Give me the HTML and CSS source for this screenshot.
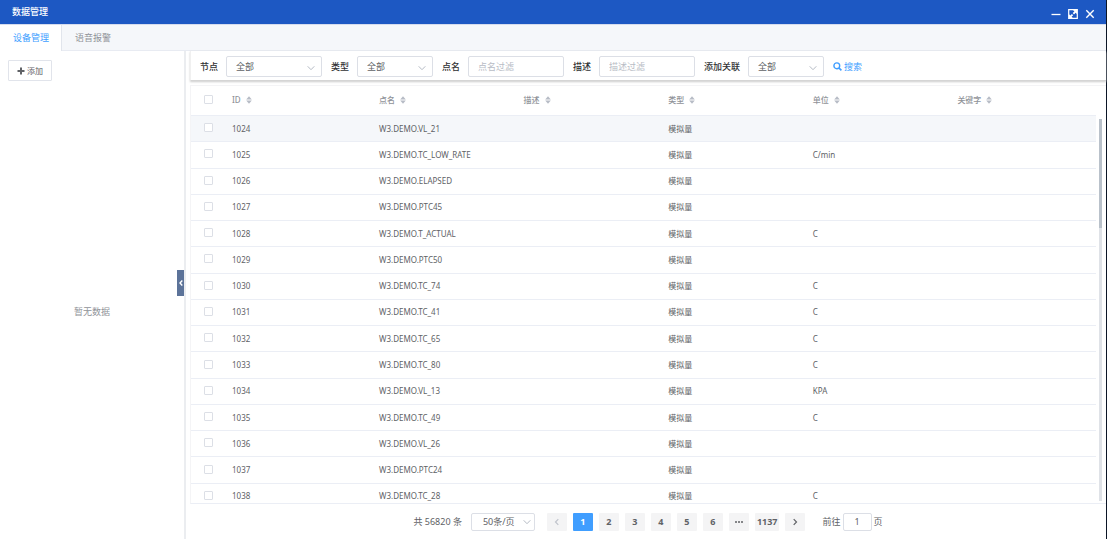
FILE: index.html
```html
<!DOCTYPE html>
<html lang="zh-CN">
<head>
<meta charset="utf-8">
<title>数据管理</title>
<link rel="stylesheet" href="styles.css">
</head>
<body>
<svg class="defs" aria-hidden="true">
  <symbol id="down" viewBox="0 0 8 8"><path d="M.7 2.3 4 5.7l3.3-3.4" fill="none" stroke="currentColor"/></symbol>
  <symbol id="sort" viewBox="0 0 6 8"><path d="M3 .3 5.8 3.4H.2zM3 7.7 5.8 4.6H.2z" fill="currentColor"/></symbol>
</svg>
<div class="window">
  <header class="titlebar">
    <h1 class="title">数据管理</h1>
    <div class="controls">
      <button class="control" aria-label="最小化"><svg viewBox="0 0 10 10"><path d="M.5 5.5h9" stroke="currentColor" stroke-width="1.3"/></svg></button>
      <button class="control" aria-label="最大化"><svg viewBox="0 0 10 10"><path d="M.7.7h8.6v8.6H.7z" fill="none" stroke="currentColor" stroke-width="1.2"/><path d="M5 1h4v4L7.700 3.700 6 5.400 4.700 4.100 6.400 2.400zM1 9V5.200l1.300 1.300 1.600-1.600 1.300 1.300-1.600 1.600L4.800 9z" fill="currentColor"/></svg></button>
      <button class="control" aria-label="关闭"><svg viewBox="0 0 10 10"><path d="m1.300 1.300 7.400 7.400m0-7.400L1.300 8.700" stroke="currentColor" stroke-width="1.4"/></svg></button>
    </div>
  </header>
  <nav class="tabs">
    <button class="tab tab-active">设备管理</button>
    <button class="tab">语音报警</button>
  </nav>
  <div class="workspace">
    <aside class="side">
      <button class="add"><svg viewBox="0 0 8 8"><path d="M4 .5v7M.5 4h7" stroke="currentColor" stroke-width="2"/></svg>添加</button>
      <p class="empty">暂无数据</p>
      <button class="collapse" aria-label="收起"><svg viewBox="0 0 6 8"><path d="M4.300 1.500 2 4l2.300 2.500" fill="none" stroke="currentColor" stroke-width="1.400"/></svg></button>
    </aside>
    <main class="main">
      <form class="filters">
        <label class="label" for="node">节点</label>
        <div class="select"><select id="node"><option>全部</option></select><svg><use href="#down"/></svg></div>
        <label class="label" for="type">类型</label>
        <div class="select select-short"><select id="type"><option>全部</option></select><svg><use href="#down"/></svg></div>
        <label class="label" for="name">点名</label>
        <input class="field" id="name" type="text" placeholder="点名过滤">
        <label class="label" for="desc">描述</label>
        <input class="field" id="desc" type="text" placeholder="描述过滤">
        <label class="label" for="linked">添加关联</label>
        <div class="select select-short"><select id="linked"><option>全部</option></select><svg><use href="#down"/></svg></div>
        <button class="search" type="button"><svg viewBox="0 0 9 9"><circle cx="3.800" cy="3.800" r="2.900" fill="none" stroke="currentColor" stroke-width="1.400"/><path d="m6 6 2.400 2.400" stroke="currentColor" stroke-width="1.700"/></svg>搜索</button>
      </form>
      <section class="list">
        <div class="scroller">
          <table class="table">
            <colgroup><col class="col-check"><col class="col-id"><col><col><col><col><col></colgroup>
            <thead>
              <tr>
                <th class="check"><input type="checkbox" aria-label="全选"></th>
                <th><button class="sort">ID<svg><use href="#sort"/></svg></button></th>
                <th><button class="sort">点名<svg><use href="#sort"/></svg></button></th>
                <th><button class="sort">描述<svg><use href="#sort"/></svg></button></th>
                <th><button class="sort">类型<svg><use href="#sort"/></svg></button></th>
                <th><button class="sort">单位<svg><use href="#sort"/></svg></button></th>
                <th><button class="sort">关键字<svg><use href="#sort"/></svg></button></th>
              </tr>
            </thead>
            <tbody>
              <tr class="hover"><td class="check"><input type="checkbox" aria-label="1024"></td><td>1024</td><td>W3.DEMO.VL_21</td><td></td><td>模拟量</td><td></td><td></td></tr>
              <tr><td class="check"><input type="checkbox" aria-label="1025"></td><td>1025</td><td>W3.DEMO.TC_LOW_RATE</td><td></td><td>模拟量</td><td>C/min</td><td></td></tr>
              <tr><td class="check"><input type="checkbox" aria-label="1026"></td><td>1026</td><td>W3.DEMO.ELAPSED</td><td></td><td>模拟量</td><td></td><td></td></tr>
              <tr><td class="check"><input type="checkbox" aria-label="1027"></td><td>1027</td><td>W3.DEMO.PTC45</td><td></td><td>模拟量</td><td></td><td></td></tr>
              <tr><td class="check"><input type="checkbox" aria-label="1028"></td><td>1028</td><td>W3.DEMO.T_ACTUAL</td><td></td><td>模拟量</td><td>C</td><td></td></tr>
              <tr><td class="check"><input type="checkbox" aria-label="1029"></td><td>1029</td><td>W3.DEMO.PTC50</td><td></td><td>模拟量</td><td></td><td></td></tr>
              <tr><td class="check"><input type="checkbox" aria-label="1030"></td><td>1030</td><td>W3.DEMO.TC_74</td><td></td><td>模拟量</td><td>C</td><td></td></tr>
              <tr><td class="check"><input type="checkbox" aria-label="1031"></td><td>1031</td><td>W3.DEMO.TC_41</td><td></td><td>模拟量</td><td>C</td><td></td></tr>
              <tr><td class="check"><input type="checkbox" aria-label="1032"></td><td>1032</td><td>W3.DEMO.TC_65</td><td></td><td>模拟量</td><td>C</td><td></td></tr>
              <tr><td class="check"><input type="checkbox" aria-label="1033"></td><td>1033</td><td>W3.DEMO.TC_80</td><td></td><td>模拟量</td><td>C</td><td></td></tr>
              <tr><td class="check"><input type="checkbox" aria-label="1034"></td><td>1034</td><td>W3.DEMO.VL_13</td><td></td><td>模拟量</td><td>KPA</td><td></td></tr>
              <tr><td class="check"><input type="checkbox" aria-label="1035"></td><td>1035</td><td>W3.DEMO.TC_49</td><td></td><td>模拟量</td><td>C</td><td></td></tr>
              <tr><td class="check"><input type="checkbox" aria-label="1036"></td><td>1036</td><td>W3.DEMO.VL_26</td><td></td><td>模拟量</td><td></td><td></td></tr>
              <tr><td class="check"><input type="checkbox" aria-label="1037"></td><td>1037</td><td>W3.DEMO.PTC24</td><td></td><td>模拟量</td><td></td><td></td></tr>
              <tr><td class="check"><input type="checkbox" aria-label="1038"></td><td>1038</td><td>W3.DEMO.TC_28</td><td></td><td>模拟量</td><td>C</td><td></td></tr>
            </tbody>
          </table>
        </div>
        <div class="track"><div class="thumb"></div></div>
      </section>
      <footer class="pagination">
        <span>共 56820 条</span>
        <div class="select select-page"><select aria-label="每页条数"><option>50条/页</option></select><svg><use href="#down"/></svg></div>
        <div class="pages">
          <button class="page page-off" aria-label="上一页" disabled><svg viewBox="0 0 8 8"><path d="M5.300 1.200 2.500 4l2.800 2.800" fill="none" stroke="currentColor" stroke-width="1.200"/></svg></button>
          <button class="page page-current">1</button>
          <button class="page">2</button>
          <button class="page">3</button>
          <button class="page">4</button>
          <button class="page">5</button>
          <button class="page">6</button>
          <button class="page" aria-label="更多"><svg viewBox="0 0 8 8"><path d="M0 3.200h2v1.600H0zm3 0h2v1.600H3zm3 0h2v1.600H6z" fill="currentColor"/></svg></button>
          <button class="page">1137</button>
          <button class="page" aria-label="下一页"><svg viewBox="0 0 8 8"><path d="M2.700 1.200 5.500 4 2.700 6.800" fill="none" stroke="currentColor" stroke-width="1.200"/></svg></button>
        </div>
        <label class="jump">前往<input type="text" value="1">页</label>
      </footer>
    </main>
  </div>
</div>
</body>
</html>
```

FILE: styles.css
```css
* { box-sizing: border-box; }
body {
  margin: 0;
  color: #606266;
  font: 9px/12px "Noto Sans", "Noto Sans CJK SC", sans-serif;
}
button, input, select { margin: 0; padding: 0; border: 0; background: none; color: inherit; font: inherit; }
button { display: flex; align-items: center; justify-content: center; cursor: pointer; }
svg { display: block; flex: none; }
.defs { position: absolute; width: 0; height: 0; }

.window {
  display: flex;
  flex-direction: column;
  height: 100vh;
  border-right: 1px solid #0b1526;
  background: #fff;
}
.titlebar {
  display: flex;
  align-items: center;
  justify-content: space-between;
  height: 24px;
  padding: 0 11px 0 12px;
  background: #1d58c3;
  color: #fff;
}
.title { margin: 0; font-size: 9px; font-weight: 500; }
.controls { display: flex; gap: 7px; padding-top: 3px; }
.control svg { width: 10px; height: 10px; }

.tabs {
  display: flex;
  height: 27px;
  border-top: 1px solid #d5dcee;
  border-bottom: 1px solid #e8ebf2;
  background: #f5f7fa;
}
.tab { padding: 0 12px 0 13px; color: #909399; }
.tab-active {
  margin-bottom: -1px;
  border-right: 1px solid #e1e5ec;
  background: #fff;
  color: #409eff;
}

.workspace { display: flex; flex: 1; min-height: 0; }
.side {
  position: relative;
  display: flex;
  flex-direction: column;
  flex: none;
  width: 186px;
  padding: 9px 8px 0;
  border-right: 2px solid #ebedf0;
}
.add {
  align-self: flex-start;
  gap: 2px;
  height: 21px;
  padding: 0 8px;
  border: 1px solid #e1e4eb;
  border-radius: 1px;
  font-size: 8px;
}
.add svg { width: 8px; height: 8px; }
.empty { margin: auto; padding-top: 4px; color: #909399; }
.collapse {
  position: absolute;
  top: 219px;
  right: 0;
  width: 7px;
  height: 26px;
  background: #5c7399;
  color: #fff;
}
.collapse svg { width: 6px; height: 8px; }

.main { display: flex; flex: 1; flex-direction: column; min-width: 0; padding-left: 4px; }
.filters {
  display: flex;
  align-items: center;
  flex: none;
  height: 30px;
  padding: 2px 9px 0;
  border-bottom: 1px solid #d5d5d5;
  border-left: 1px solid #f0f0f0;
  box-shadow: 0 1px 2px #ccc;
}
.label { margin-right: 8px; color: #303133; font-weight: 500; }
.select { position: relative; width: 96px; height: 21px; margin-right: 9px; }
.select-short { width: 76px; }
.select select {
  width: 100%;
  height: 100%;
  padding-left: 9px;
  border: 1px solid #dcdfe6;
  border-radius: 2px;
  appearance: none;
}
.select svg { position: absolute; top: 8px; right: 7px; width: 8px; height: 8px; color: #b4bac4; pointer-events: none; }
.field {
  width: 96px;
  height: 21px;
  margin-right: 9px;
  padding: 0 9px;
  border: 1px solid #dcdfe6;
  border-radius: 2px;
}
.field::placeholder { color: #b8bcc5; }
.search { gap: 2px; color: #409eff; }
.search svg { width: 9px; height: 9px; }

.list {
  display: flex;
  flex: 1;
  min-height: 0;
  margin-top: 4px;
  border-top: 1px solid #f4f4f6;
  border-bottom: 1px solid #ebeef5;
  border-left: 1px solid #f4f4f6;
}
.scroller { flex: 1; overflow: hidden; }
.table {
  width: 100%;
  height: 424px;
  border-collapse: separate;
  border-spacing: 0;
  table-layout: fixed;
  font-size: 8px;
}
.col-check { width: 35px; }
.col-id { width: 147px; }
.table th, .table td {
  height: 26px;
  padding: 0 6px;
  border-bottom: 1px solid #ebeef5;
  text-align: left;
  white-space: nowrap;
}
.table th { height: 30px; padding-bottom: 2px; color: #909399; }
.table .check { padding: 0; }
.table .check input {
  display: block;
  width: 9px;
  height: 9px;
  margin: 0 auto 2px;
  border: 1px solid #dcdfe6;
  border-radius: 1px;
  background: #fff;
  appearance: none;
}
.hover { background: #f5f7fa; }
.sort { gap: 5px; font-weight: 500; }
.sort svg { width: 6px; height: 8px; color: #b7bcc6; }
.track {
  flex: none;
  width: 3px;
  margin: 33px 4px 2px 3px;
  background: #dfe2e7;
}
.thumb { height: 28.5%; background: #b9c1ca; }

.pagination {
  display: flex;
  align-items: center;
  justify-content: center;
  flex: none;
  height: 35px;
}
.pagination .select-page { width: 64px; height: 18px; margin: 0 12px 0 9px; }
.select-page select { padding-left: 11px; }
.select-page svg { top: 5px; right: 4px; }
.pages { display: flex; gap: 6px; }
.page {
  min-width: 20px;
  height: 18px;
  padding: 0 2px;
  border-radius: 1px;
  background: #f4f4f5;
  font-weight: 700;
}
.page svg { width: 8px; height: 8px; }
.page-off { color: #c0c4cc; }
.page-current { background: #409eff; color: #fff; }
.jump { display: flex; align-items: center; gap: 2px; margin-left: 17px; }
.jump input { width: 29px; height: 18px; border: 1px solid #dcdfe6; border-radius: 2px; text-align: center; }
```
